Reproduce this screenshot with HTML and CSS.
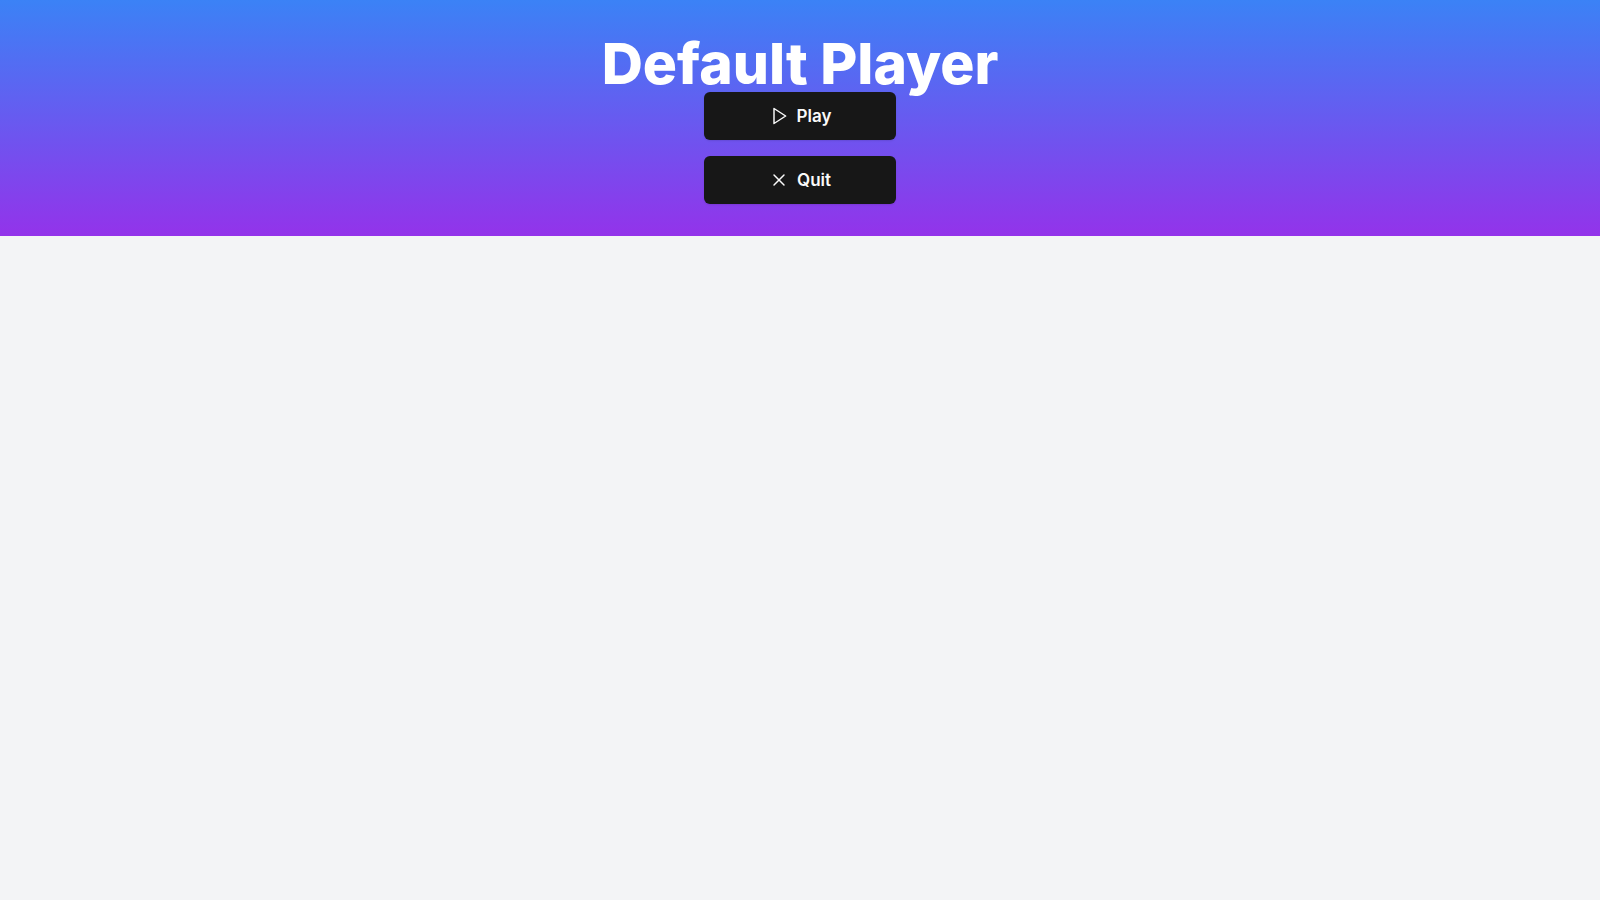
FILE: index.html
```html
<!DOCTYPE html>
<html lang="en">
<head>
<meta charset="utf-8">
<title>Default Player</title>
<link rel="stylesheet" href="styles.css">
</head>
<body>
<main class="hero">
  <h1 class="title">Default Player</h1>
  <div class="actions">
    <button class="button" type="button">
      <svg class="icon" viewBox="0 0 24 24" aria-hidden="true"><polygon points="6 3 20 12 6 21 6 3"/></svg>
      Play
    </button>
    <button class="button" type="button">
      <svg class="icon" viewBox="0 0 24 24" aria-hidden="true"><path d="M18 6 6 18"/><path d="m6 6 12 12"/></svg>
      Quit
    </button>
  </div>
</main>
</body>
</html>
```
FILE: styles.css
```css
* {
  box-sizing: border-box;
}

body {
  margin: 0;
  background: #f3f4f6;
  font-family: Inter, sans-serif;
}

.hero {
  display: flex;
  flex-direction: column;
  align-items: center;
  padding: 36px 32px 32px;
  background: linear-gradient(to bottom, #3b82f6, #9333ea);
}

.title {
  margin: 0;
  color: #fff;
  font-size: 57px;
  line-height: 56px;
  font-weight: 800;
}

.actions {
  display: flex;
  flex-direction: column;
  gap: 16px;
}

.button {
  display: flex;
  align-items: center;
  justify-content: center;
  gap: 8px;
  width: 192px;
  height: 48px;
  padding: 8px 16px;
  border: 0;
  border-radius: 6px;
  background: #171717;
  box-shadow: 0 1px 2px rgba(0, 0, 0, 0.1);
  color: #fafafa;
  font-family: inherit;
  font-size: 17px;
  line-height: 28px;
  font-weight: 600;
  cursor: pointer;
}

.icon {
  width: 20px;
  height: 20px;
  fill: none;
  stroke: currentColor;
  stroke-width: 1.75;
  stroke-linecap: round;
  stroke-linejoin: round;
}
```
